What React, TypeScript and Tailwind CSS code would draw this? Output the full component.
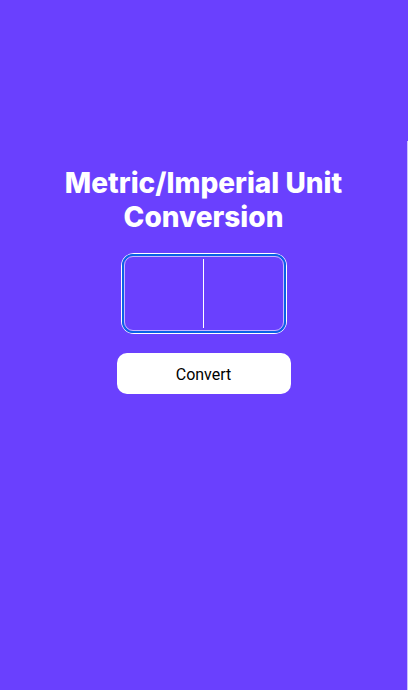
import React from 'react';

// --- Unit conversion screen ---

const UnitField: React.FC = () => (
    <div className="rounded-[12px] shadow-[0_0_0_1px_#ffffff]">
        <div className="rounded-[11px] border-2 border-[#0b63e6]">
            <div className="flex w-[160px] h-[75px] rounded-[9px] border border-[#c7b6ff] p-[2px]">
                <input aria-label="Metric value" className="w-1/2 h-full bg-transparent outline-none text-white" />
                <div className="w-px bg-white" />
                <input aria-label="Imperial value" className="w-1/2 h-full bg-transparent outline-none text-white" />
            </div>
        </div>
    </div>
);

export default function App() {
    return (
        <div className="flex w-full min-h-[690px] bg-[#6a40fe]" style={{ fontFamily: 'Inter, "Noto Sans", sans-serif' }}>
            <main className="flex-1 flex flex-col items-center pt-[166px]">
                <h1 className="text-white text-[28px] leading-[34px] font-extrabold text-center">
                    Metric/Imperial Unit
                    <br />
                    Conversion
                </h1>
                <div className="mt-[20px]">
                    <UnitField />
                </div>
                <button className="mt-[20px] w-[174px] h-[41px] pt-[3px] rounded-[10px] bg-white text-black text-[16px]" style={{ fontFamily: 'Roboto, sans-serif' }}>
                    Convert
                </button>
            </main>
            <div className="w-px flex flex-col pt-[141px]">
                <div className="flex-1 bg-[#c9bfff]" />
            </div>
        </div>
    );
}
